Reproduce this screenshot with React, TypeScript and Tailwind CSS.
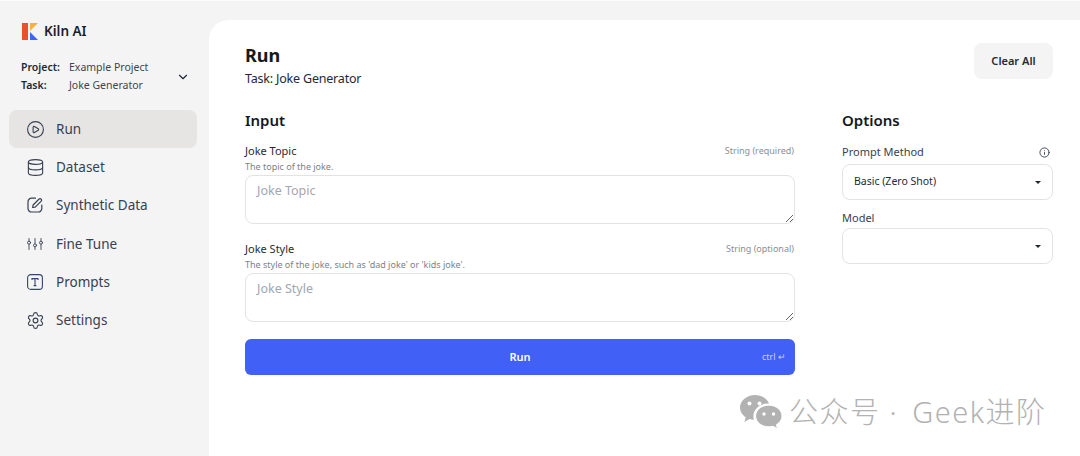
import { ChevronDown, CirclePlay, Database, Info, Settings } from "lucide-react";
import type { ReactNode } from "react";

const FONT = "font-['Noto_Sans','Noto_Sans_CJK_SC',sans-serif]";

function PenIcon() {
  return (
    <svg viewBox="0 0 16 16" className="w-4 h-4" fill="none" stroke="currentColor" strokeWidth="1.2" strokeLinecap="round" strokeLinejoin="round">
      <path d="M8.500 1.200H4.500A3.500 3.500 0 0 0 1 4.700v6.800A3.500 3.500 0 0 0 4.500 15h6.800a3.500 3.500 0 0 0 3.500-3.500V8" />
      <path d="M5.600 10.500l.5-2.500 6-6a1.300 1.300 0 0 1 1.900 0l.2.200a1.300 1.300 0 0 1 0 1.900l-6 6z" />
    </svg>
  );
}

function TuneIcon() {
  return (
    <svg viewBox="0 0 16 12" className="w-4 h-3" fill="none" stroke="currentColor" strokeWidth="0.9" strokeLinecap="round">
      <path d="M2 0.500v2.500M2 6.500v5M8 0.500v5M8 9v2.500M14 0.500v2.500M14 6.500v5" />
      <circle cx="2" cy="4.700" r="1.500" />
      <circle cx="8" cy="7.300" r="1.500" />
      <circle cx="14" cy="4.700" r="1.500" />
    </svg>
  );
}

function PromptIcon() {
  return (
    <svg viewBox="0 0 16 16" className="w-4 h-4 text-[#34456e]" fill="none" stroke="currentColor" strokeWidth="1.1">
      <rect x="0.600" y="0.600" width="14.800" height="14.800" rx="3.200" />
      <path d="M5 6V4.600h6V6M8 4.600v7M6.600 11.600h2.800" />
    </svg>
  );
}

function WeChatIcon() {
  return (
    <svg viewBox="0 0 42 34" className="w-[42px] h-[34px]" fill="#b2b2b2">
      <path d="M15 0C6.800 0 0 5.600 0 12.600c0 4 2.200 7.400 5.700 9.800L4.400 27l5.200-2.900c1.400.4 2.900.6 4.400.7-.4-1.200-.6-2.400-.6-3.700 0-7 6.400-12.600 14.400-12.600h1.200C27.200 3.400 21.600 0 15 0z" />
      <path d="M42 21c0-6-5.900-10.800-13.200-10.800S15.600 15 15.600 21s5.900 10.800 13.200 10.800c1.500 0 2.900-.2 4.200-.6l4.500 2.600-1.100-4C39.800 27.800 42 24.600 42 21z" stroke="#fff" strokeWidth="1" />
      <circle cx="9.500" cy="8.500" r="2" fill="#fff" />
      <circle cx="19.500" cy="8.500" r="2" fill="#fff" />
      <circle cx="24" cy="19" r="1.700" fill="#fff" />
      <circle cx="33.500" cy="19" r="1.700" fill="#fff" />
    </svg>
  );
}

const navItems: { label: string; icon: ReactNode; active?: boolean }[] = [
  { label: "Run", icon: <CirclePlay className="w-[19px] h-[19px] -mx-[1.500px]" strokeWidth={1.4} />, active: true },
  { label: "Dataset", icon: <Database className="w-[19px] h-[19px] -mx-[1.500px]" strokeWidth={1.4} /> },
  { label: "Synthetic Data", icon: <PenIcon /> },
  { label: "Fine Tune", icon: <TuneIcon /> },
  { label: "Prompts", icon: <PromptIcon /> },
  { label: "Settings", icon: <Settings className="w-[19px] h-[19px] -mx-[1.500px]" strokeWidth={1.4} /> },
];

function Field({ label, hint, desc }: { label: string; hint: string; desc: string }) {
  return (
    <div>
      <div className="flex items-center justify-between h-[17px] mt-[1px] pr-[1px]">
        <span className="text-[11px] text-[#1f2937]">{label}</span>
        <span className="text-[9px] leading-[15px] self-start text-[#8b8f96]">{hint}</span>
      </div>
      <div className="text-[9px] leading-[14px] text-[#7d828a]">{desc}</div>
      <textarea
        placeholder={label}
        className="block mt-[1px] w-full h-[49px] rounded-lg border border-[#e3e3e3] px-[11px] py-[5px] text-[12.500px] leading-[20px] placeholder:text-[#a3a6ad] outline-none"
      />
    </div>
  );
}

function Select({ value }: { value?: string }) {
  return (
    <div className="flex items-center justify-between rounded-lg border border-[#e3e3e3] pl-[11px] pr-[11px] h-[36px]">
      <span className="text-[10.500px] text-[#1f2937]">{value}</span>
      <span className="w-0 h-0 border-x-[3px] border-x-transparent border-t-[3px] border-t-[#1f2937]" />
    </div>
  );
}

export default function App() {
  return (
    <div className={`${FONT} relative flex w-[1080px] h-[456px] overflow-hidden bg-[#f4f4f4] border-t border-[#fbfbfb] text-[#1f2937]`}>
      <aside className="w-[209px] shrink-0 pt-[19px]">
        <div className="flex items-center pl-[22px] h-[22px]">
          <svg viewBox="0 0 16 17" className="w-4 h-[17px]">
            <rect x="0" y="0" width="6" height="17" fill="#e8502f" />
            <path d="M8 0h8l-8 8z" fill="#f7b13c" />
            <path d="M8 9l8 8H8z" fill="#4262f5" />
          </svg>
          <span className="ml-[6px] text-[13.500px] font-semibold text-[#1b1f27]">Kiln AI</span>
        </div>

        <div className="flex items-center justify-between pl-[21px] pr-[19px] mt-[17px]">
          <div className="grid grid-cols-[48px_1fr] gap-y-[1px] text-[10.500px] leading-[17px]">
            <span className="font-semibold">Project:</span>
            <span className="text-[#3d4450]">Example Project</span>
            <span className="font-semibold">Task:</span>
            <span className="text-[#3d4450]">Joke Generator</span>
          </div>
          <ChevronDown className="w-[14px] h-[14px] text-[#1f2937]" strokeWidth={2} />
        </div>

        <nav className="mt-[16px] pl-[9px] pr-[12px] flex flex-col">
          {navItems.map((item) => (
            <div
              key={item.label}
              className={`flex items-center gap-[13px] h-[38.200px] pl-[18px] rounded-lg text-[13.500px] text-[#374151] ${item.active ? "bg-[#e6e5e3]" : ""}`}
            >
              {item.icon}
              <span>{item.label}</span>
            </div>
          ))}
        </nav>
      </aside>

      <main className="flex-1 mt-[19px] bg-white rounded-tl-[20px] pl-[36px] pr-[27px]">
        <header className="flex items-start justify-between pt-[23px]">
          <div>
            <h1 className="text-[18px] leading-[24px] font-bold text-[#15181e]">Run</h1>
            <p className="text-[12.500px] tracking-[-0.200px] leading-[20px] text-[#1f2937] mt-[2px]">Task: Joke Generator</p>
          </div>
          <button className="w-[79px] h-[36px] rounded-lg bg-[#f4f4f4] text-[11px] font-semibold text-[#1f2937]">Clear All</button>
        </header>

        <div className="flex gap-[47px] mt-[19px]">
          <section className="w-[550px]">
            <h2 className="text-[15px] leading-[24px] font-semibold text-[#15181e]">Input</h2>
            <div className="mt-[10px] flex flex-col gap-[16px]">
              <Field label="Joke Topic" hint="String (required)" desc="The topic of the joke." />
              <Field label="Joke Style" hint="String (optional)" desc="The style of the joke, such as 'dad joke' or 'kids joke'." />
            </div>
            <button className="relative mt-[17px] flex items-center justify-center w-full h-[36px] rounded-md bg-[#4060f6] text-[11px] font-semibold text-white">
              Run
              <span className="absolute right-[9px] text-[9px] font-normal text-[#c9d2fb]">ctrl ↵</span>
            </button>
          </section>

          <section className="flex-1">
            <h2 className="text-[15px] leading-[24px] font-semibold text-[#15181e]">Options</h2>
            <div className="flex items-center justify-between mt-[12px] h-[17px] pr-[3px]">
              <span className="text-[11px] text-[#374151]">Prompt Method</span>
              <Info className="w-[11px] h-[11px] text-[#374151]" strokeWidth={2} />
            </div>
            <div className="mt-[3px]">
              <Select value="Basic (Zero Shot)" />
            </div>
            <div className="text-[11px] leading-[17px] text-[#374151] mt-[9px]">Model</div>
            <div className="mt-[2px]">
              <Select />
            </div>
          </section>
        </div>
      </main>

      <div className="absolute left-[740px] top-[394px] flex items-center gap-[7px] text-[#b2b2b2]">
        <WeChatIcon />
        <span className="text-[29px] leading-[34px] tracking-[1.500px] font-light">
          公众号 · <span className="ml-[5px]">Geek进阶</span>
        </span>
      </div>
    </div>
  );
}
